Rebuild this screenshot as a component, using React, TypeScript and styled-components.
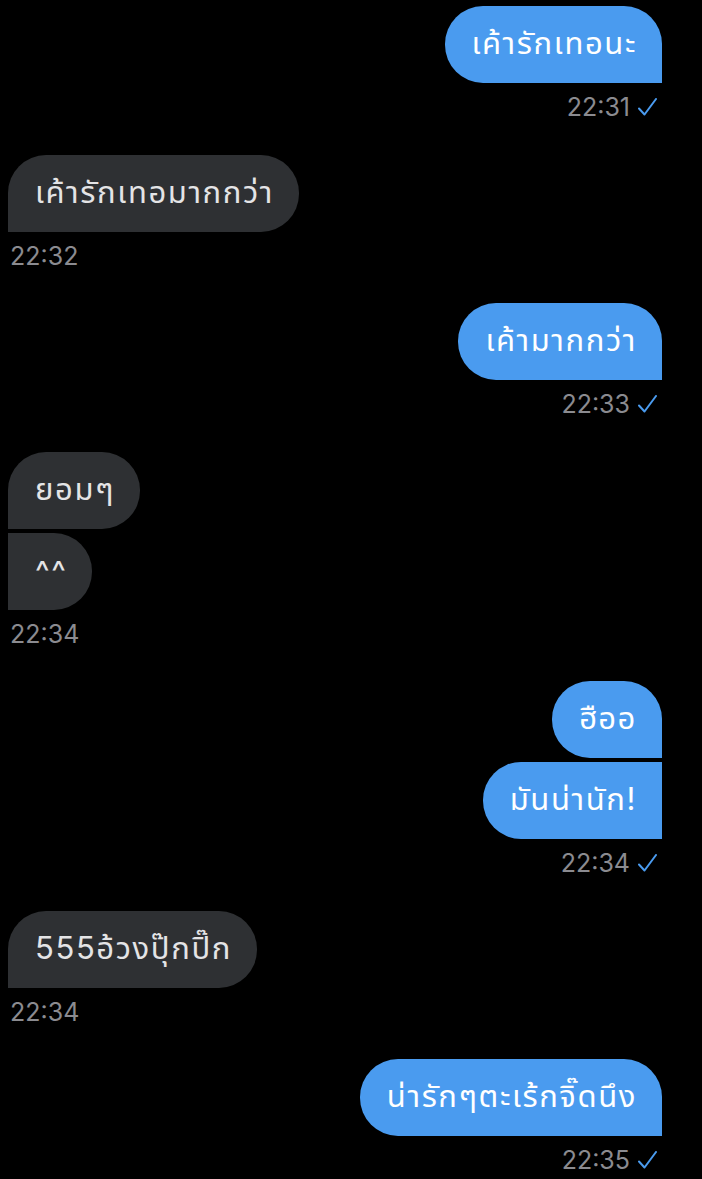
import React from "react";
import styled, { createGlobalStyle, css } from "styled-components";

const GlobalStyle = createGlobalStyle`
    html, body {
        margin: 0;
        padding: 0;
        background: #000;
    }
`;

const Chat = styled.div`
    display: flex;
    flex-direction: column;
    padding: 6px 40px 0 8px;
    background: #000;
    min-height: 1179px;
    box-sizing: border-box;
    font-family: Inter, "Noto Sans Thai", "Noto Sans", sans-serif;
`;

const Group = styled.div<{ $out?: boolean }>`
    display: flex;
    flex-direction: column;
    align-items: ${(p) => (p.$out ? "flex-end" : "flex-start")};
    gap: 4px;
    margin-bottom: 32.5px;
`;

type Pos = "single" | "first" | "last";

const Bubble = styled.div<{ $out?: boolean; $pos: Pos }>`
    box-sizing: border-box;
    height: 77px;
    padding: 0 25px 0 27px;
    display: flex;
    align-items: center;
    font-size: 31px;
    letter-spacing: 1.6px;
    white-space: nowrap;
    border-radius: 38px;
    background: ${(p) => (p.$out ? "#4a9bef" : "#2e3033")};
    color: ${(p) => (p.$out ? "#ffffff" : "#e4e4e6")};
    ${(p) =>
        p.$out
            ? css`
                  border-bottom-right-radius: 0;
                  ${p.$pos === "last" && "border-top-right-radius: 0;"}
              `
            : css`
                  border-bottom-left-radius: 0;
                  ${p.$pos === "last" && "border-top-left-radius: 0;"}
              `}
`;

const Meta = styled.div<{ $out?: boolean }>`
    display: flex;
    align-items: center;
    gap: 8px;
    margin-top: 5px;
    padding: ${(p) => (p.$out ? "0 5px 0 0" : "0 0 0 2px")};
    font-size: 25px;
    line-height: 30px;
    color: #8b8b90;
`;

const Check = styled.svg`
    width: 19px;
    height: 18px;
`;

const Tick = () => (
    <Check viewBox="0 0 19 18" fill="none">
        <path
            d="M1 10.5l5.5 6L18 1"
            stroke="#4a9bef"
            strokeWidth="2"
            strokeLinecap="round"
            strokeLinejoin="round"
        />
    </Check>
);

const messages = [
    { out: true, texts: ["เค้ารักเทอนะ"], time: "22:31" },
    { out: false, texts: ["เค้ารักเทอมากกว่า"], time: "22:32" },
    { out: true, texts: ["เค้ามากกว่า"], time: "22:33" },
    { out: false, texts: ["ยอมๆ", "^^"], time: "22:34" },
    { out: true, texts: ["ฮืออ", "มันน่านัก!"], time: "22:34" },
    { out: false, texts: ["555อ้วงปุ๊กปิ๊ก"], time: "22:34" },
    { out: true, texts: ["น่ารักๆตะเร้กจิ๊ดนึง"], time: "22:35" },
];

const App = () => {
    return (
        <>
            <GlobalStyle />
            <Chat>
                {messages.map((m, i) => (
                    <Group key={i} $out={m.out}>
                        {m.texts.map((t, j) => (
                            <Bubble
                                key={j}
                                $out={m.out}
                                $pos={
                                    m.texts.length === 1
                                        ? "single"
                                        : j === 0
                                        ? "first"
                                        : "last"
                                }
                            >
                                {t}
                            </Bubble>
                        ))}
                        <Meta $out={m.out}>
                            {m.time}
                            {m.out && <Tick />}
                        </Meta>
                    </Group>
                ))}
            </Chat>
        </>
    );
};

export default App;
